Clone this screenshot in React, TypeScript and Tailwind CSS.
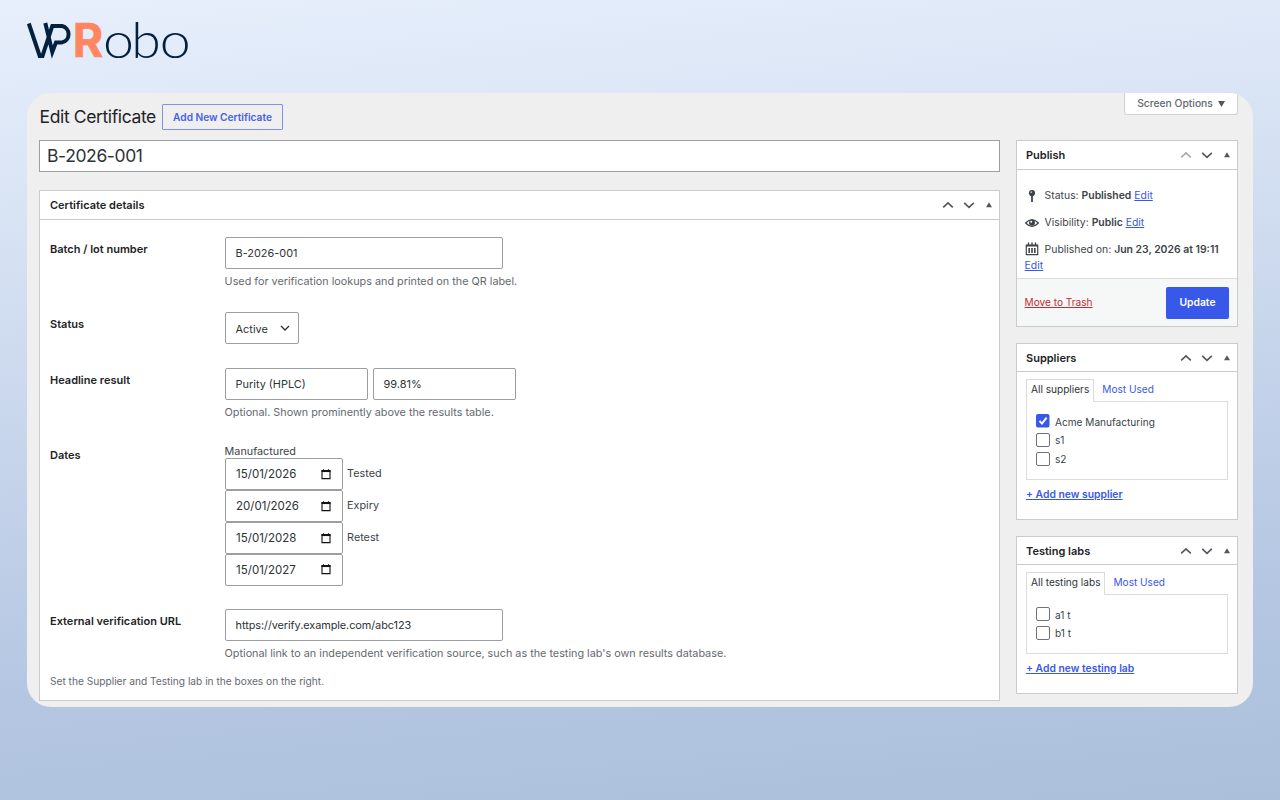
import React from 'react';

type BoxHeaderProps = {
  title: string;
  upDisabled?: boolean;
  className?: string;
};

const BoxHeader: React.FC<BoxHeaderProps> = ({ title, upDisabled, className = 'h-[29px] pl-[9px]' }) => (
  <div className={`flex shrink-0 items-center justify-between border-b border-[#c9cbcd] pr-[7px] ${className}`}>
    <h2 className="text-[11px] font-semibold text-[#1d2327]">{title}</h2>
    <div className="flex items-center text-[#50575e]">
      <svg className={upDisabled ? 'h-3 w-3 text-[#a7aaad]' : 'h-3 w-3'} viewBox="0 0 12 12" fill="none" stroke="currentColor" strokeWidth="1.6">
        <path d="M1.2 8.4 6 3.8l4.8 4.6" />
      </svg>
      <svg className="ml-[9px] h-3 w-3" viewBox="0 0 12 12" fill="none" stroke="currentColor" strokeWidth="1.6">
        <path d="M1.2 3.8 6 8.4l4.8-4.6" />
      </svg>
      <svg className="ml-[11px] h-[6px] w-[6px]" viewBox="0 0 6 6" fill="currentColor">
        <path d="M3 .2 6 5.2H0z" />
      </svg>
    </div>
  </div>
);

const Field: React.FC<{ value: string; className: string }> = ({ value, className }) => (
  <div className={`flex h-8 items-center rounded-[2px] border border-[#9b9ea2] bg-white pl-[10px] text-[10.9px] text-[#2c3338] ${className}`}>
    {value}
  </div>
);

const DateField: React.FC<{ value: string }> = ({ value }) => (
  <div className="flex h-8 w-[118px] items-center justify-between rounded-[2px] border border-[#9b9ea2] bg-white pl-[10.5px] pr-[11px] text-[11.5px] text-[#2c3338]">
    <span className="pt-px">{value}</span>
    <svg className="h-[11px] w-[10px]" viewBox="0 0 10 11" fill="none" stroke="#111">
      <path d="M1 1.6h8v8H1z" strokeWidth="1.1" />
      <path d="M.5 2.2h9" strokeWidth="1.7" />
      <path d="M2.5.2v2M7.5.2v2" strokeWidth="1.1" />
    </svg>
  </div>
);

const Label: React.FC<{ children: React.ReactNode }> = ({ children }) => (
  <div className="w-[174.6px] shrink-0 pt-[5px] text-[11px] leading-[14px] font-semibold text-[#1d2327]">{children}</div>
);

const Hint: React.FC<{ children: React.ReactNode }> = ({ children }) => (
  <p className="mt-[5px] whitespace-nowrap text-[10.82px] leading-[15px] text-[#646970]">{children}</p>
);

const dates = [
  { value: '15/01/2026', next: 'Tested' },
  { value: '20/01/2026', next: 'Expiry' },
  { value: '15/01/2028', next: 'Retest' },
  { value: '15/01/2027', next: '' },
];

type TaxonomyBoxProps = {
  title: string;
  tab: string;
  add: string;
  items: { name: string; checked?: boolean }[];
  className: string;
  listClass: string;
};

const TaxonomyBox: React.FC<TaxonomyBoxProps> = ({ title, tab, add, items, className, listClass }) => (
  <section className={`border border-[#c9cbcd] bg-white ${className}`}>
    <BoxHeader title={title} className="h-[28px] pl-[9px] pt-px" />
    <div className="px-[9px] pt-[7px] text-[10.1px]">
      <div className="flex h-[22px] items-stretch">
        <div className="z-10 -mb-px flex items-center border border-b-0 border-[#dcdcde] bg-white px-1 pb-[2px] text-[#2c3338]">{tab}</div>
        <div className="flex items-center pl-[8px] text-[#3858e9]">Most Used</div>
      </div>
      <div className={`border border-[#dcdcde] pl-[9px] pt-[10px] ${listClass}`}>
        {items.map((item) => (
          <div key={item.name} className="flex h-[18.7px] items-center text-[#3c434a]">
            {item.checked ? (
              <svg className="h-[14px] w-[14px]" viewBox="0 0 14 14">
                <rect width="13.5" height="13.5" rx="2" fill="#3858e9" />
                <path d="m3.5 7 2.5 2.600 4.600-6" fill="none" stroke="#fff" strokeWidth="1.9" />
              </svg>
            ) : (
              <span className="h-[14px] w-[14px] rounded-[2px] border border-[#6f7378] bg-white" />
            )}
            <span className="ml-[5px] pt-[2px]">{item.name}</span>
          </div>
        ))}
      </div>
      <a className="mt-[7px] block text-[10.35px] font-semibold text-[#3858e9] underline">{add}</a>
    </div>
  </section>
);

const Logo: React.FC = () => (
  <svg className="h-[90px] w-[200px]" viewBox="0 0 200 90">
    <path
      d="M28.8 23.500 39.700 55.900h2.800L52.300 26h9.700a8.400 8.400 0 0 1 0 16.400h-6L52.300 52 45.300 23"
      fill="none"
      stroke="#04203f"
      strokeWidth="4"
      strokeMiterlimit="6"
    />
    <text x="72.8" y="57" fontSize="46.5" fontWeight="700" fill="#ff8660" stroke="#ff8660" strokeWidth=".6" fontFamily="Inter, sans-serif" textLength="30.5" lengthAdjust="spacingAndGlyphs">R</text>
    <g fontSize="48.5" fontWeight="300" fill="#04203f" fontFamily="Lato, sans-serif">
      <text x="103" y="57.6" textLength="31" lengthAdjust="spacingAndGlyphs">o</text>
      <text x="131.3" y="57.6" textLength="29.5" lengthAdjust="spacingAndGlyphs">b</text>
      <text x="159.700" y="57.6" textLength="31" lengthAdjust="spacingAndGlyphs">o</text>
    </g>
  </svg>
);

const App: React.FC = () => {
  return (
    <div className="h-[800px] w-[1280px] overflow-hidden bg-[linear-gradient(175deg,#e7effc_0%,#dce6f6_18%,#b4c6e2_77%,#abbfdb_100%)] font-['Inter',sans-serif]">
      <header className="h-[93px]">
        <Logo />
      </header>

      <main className="ml-[27px] flex h-[614px] w-[1226px] overflow-hidden rounded-[24px] bg-[#efefef] pl-[12px]">
        <div className="w-[961px]">
          <div className="flex h-[47px] items-center pt-px">
            <h1 className="w-[123px] whitespace-nowrap pl-[0.6px] text-[17.5px] tracking-[-0.38px] text-[#1d2327]">Edit Certificate</h1>
            <div className="flex h-[26px] w-[121px] items-center justify-center whitespace-nowrap rounded-[1px] border border-[#7f90f0] pt-px text-[10.15px] font-semibold text-[#4660e8]">
              Add New Certificate
            </div>
          </div>
          <div className="flex h-8 items-center border border-[#9b9ea2] bg-white pl-[7px] text-[17.5px] tracking-[-0.38px] text-[#2c3338]">B-2026-001</div>

          <section className="mt-[18px] h-[511px] border border-[#c9cbcd] bg-white">
            <BoxHeader title="Certificate details" className="h-[29px] pl-[10px]" />
            <div className="px-[10px] pt-[17px]">
              <div className="flex h-[75.3px]">
                <Label>Batch / lot number</Label>
                <div>
                  <Field value="B-2026-001" className="w-[278px]" />
                  <Hint>Used for verification lookups and printed on the QR label.</Hint>
                </div>
              </div>
              <div className="flex h-[55.7px]">
                <Label>Status</Label>
                <div className="flex h-8 w-[74px] items-center justify-between rounded-[2px] border border-[#9b9ea2] pl-[10px] pr-[8px] text-[10.9px] text-[#2c3338]">
                  <span className="pt-px">Active</span>
                  <svg className="h-[10px] w-[10px]" viewBox="0 0 10 10" fill="none" stroke="currentColor" strokeWidth="1.3">
                    <path d="m1 3 4 4 4-4" />
                  </svg>
                </div>
              </div>
              <div className="flex h-[77px]">
                <Label>Headline result</Label>
                <div>
                  <div className="flex gap-[5px]">
                    <Field value="Purity (HPLC)" className="w-[143px]" />
                    <Field value="99.81%" className="w-[143px]" />
                  </div>
                  <Hint>Optional. Shown prominently above the results table.</Hint>
                </div>
              </div>
              <div className="flex h-[164px]">
                <div className="-mt-[2px]">
                  <Label>Dates</Label>
                </div>
                <div className="text-[10.8px] text-[#3c434a]">
                  <div className="h-[13.6px] leading-[14px]">Manufactured</div>
                  {dates.map((date) => (
                    <div key={date.value} className="flex h-[31.8px] items-center">
                      <DateField value={date.value} />
                      <span className="ml-[4.5px]">{date.next}</span>
                    </div>
                  ))}
                </div>
              </div>
              <div className="flex h-[65.5px]">
                <Label>External verification URL</Label>
                <div>
                  <Field value="https://verify.example.com/abc123" className="w-[278px] tracking-[-0.07px]" />
                  <Hint>Optional link to an independent verification source, such as the testing lab's own results database.</Hint>
                </div>
              </div>
              <p className="text-[10.17px] leading-[15px] text-[#646970]">Set the Supplier and Testing lab in the boxes on the right.</p>
            </div>
          </section>
        </div>

        <aside className="ml-4 w-[222px]">
          <div className="flex h-[47px] justify-end">
            <div className="flex h-[22px] w-[114px] items-center justify-center gap-[5px] rounded-b-[3px] border border-t-0 border-[#cfd1d3] bg-white text-[10.3px] font-medium text-[#646970]">
              Screen Options
              <svg className="h-[6px] w-[7px]" viewBox="0 0 7 6" fill="#50575e">
                <path d="M0 0h7L3.5 6z" />
              </svg>
            </div>
          </div>

          <section className="flex h-[187px] flex-col border border-[#c9cbcd] bg-white">
            <BoxHeader title="Publish" upDisabled />
            <div className="flex-1 px-[7.6px] pt-[18px] text-[10.42px] leading-4 text-[#3c434a]">
              <div className="flex h-[27px] items-start">
                <svg className="mt-px h-[14px] w-[14px]" viewBox="0 0 14 14">
                  <circle cx="7" cy="4" r="3.1" fill="#3c434a" />
                  <path d="M7 6v7" stroke="#3c434a" strokeWidth="1.8" />
                  <circle cx="6.3" cy="3.2" r=".9" fill="#bbb" />
                </svg>
                <span className="ml-[6px]">Status: <b className="font-semibold">Published</b> <a className="text-[#3858e9] underline">Edit</a></span>
              </div>
              <div className="flex h-[27px] items-start">
                <svg className="mt-px h-[14px] w-[14px]" viewBox="0 0 14 14">
                  <path d="M.6 7Q7 .2 13.4 7 7 13.8.6 7z" fill="none" stroke="#3c434a" strokeWidth="1.2" />
                  <circle cx="7" cy="6.8" r="3" fill="#3c434a" />
                  <circle cx="6.2" cy="5.7" r="1" fill="#fff" />
                </svg>
                <span className="ml-[6px]">Visibility: <b className="font-semibold">Public</b> <a className="text-[#3858e9] underline">Edit</a></span>
              </div>
              <div className="flex h-4 items-start whitespace-nowrap">
                <svg className="h-[14px] w-[14px]" viewBox="0 0 14 14" fill="none" stroke="#3c434a">
                  <path d="M1.3 4v8.7h11.4V4" strokeWidth="1.2" />
                  <path d="M.7 3.6h12.6" strokeWidth="2" />
                  <path d="M3.5.5V3M10.5.5V3M7 .5V3" strokeWidth="1.4" />
                  <path d="M4.2 6v5M7 6v5M9.8 6v5" strokeWidth="1.6" />
                </svg>
                <span className="ml-[6px]">Published on: <b className="font-semibold">Jun 23, 2026 at 19:11</b></span>
              </div>
              <a className="block text-[#3858e9] underline">Edit</a>
            </div>
            <div className="flex h-[48px] items-center justify-between border-t border-[#dcdcde] bg-[#f6f7f7] pl-[7.6px] pr-2">
              <a className="pt-px text-[10.1px] text-[#c02f35] underline">Move to Trash</a>
              <div className="flex h-8 w-[63px] items-center justify-center rounded-[2px] bg-[#3858e9] text-[10.3px] font-semibold text-white">Update</div>
            </div>
          </section>

          <TaxonomyBox
            title="Suppliers"
            tab="All suppliers"
            add="+ Add new supplier"
            items={[{ name: 'Acme Manufacturing', checked: true }, { name: 's1' }, { name: 's2' }]}
            className="mt-4 h-[177px]"
            listClass="h-[79px]"
          />
          <TaxonomyBox
            title="Testing labs"
            tab="All testing labs"
            add="+ Add new testing lab"
            items={[{ name: 'a1 t' }, { name: 'b1 t' }]}
            className="mt-4 h-[158px]"
            listClass="h-[60px]"
          />
        </aside>
      </main>
    </div>
  );
};

export default App;
